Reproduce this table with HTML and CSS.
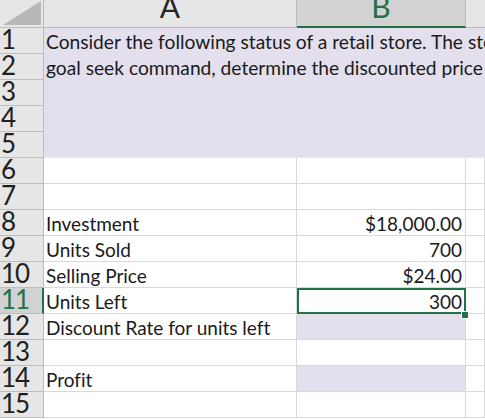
FILE: index.html
```html
<!DOCTYPE html>
<html>
<head>
<meta charset="utf-8">
<link rel="stylesheet" href="styles.css">
</head>
<body>
<div class="sheet">
  <div class="corner"><svg class="corner-tri" width="44" height="28" viewBox="0 0 44 28"><polygon points="41,1 41,25 3,25" fill="#b8b8b8"/></svg></div>
  <div class="colh">A</div>
  <div class="colh active">B</div>
  <div class="colh last"></div>

  <div class="merged"><div class="mline">Consider the following status of a retail store. The store manager wants to use the</div><div class="mline">goal seek command, determine the discounted price for the units left</div></div>

  <div class="rowh">1</div>
  <div class="rowh">2</div>
  <div class="rowh">3</div>
  <div class="rowh">4</div>
  <div class="rowh">5</div>

  <div class="rowh">6</div><div class="cell"></div><div class="cell"></div><div class="cell"></div>
  <div class="rowh">7</div><div class="cell"></div><div class="cell"></div><div class="cell"></div>
  <div class="rowh">8</div><div class="cell">Investment</div><div class="cell num">$18,000.00</div><div class="cell"></div>
  <div class="rowh">9</div><div class="cell">Units Sold</div><div class="cell num">700</div><div class="cell"></div>
  <div class="rowh">10</div><div class="cell">Selling Price</div><div class="cell num">$24.00</div><div class="cell"></div>
  <div class="rowh active">11</div><div class="cell">Units Left</div><div class="cell num selected">300<span class="handle"></span></div><div class="cell"></div>
  <div class="rowh">12</div><div class="cell">Discount Rate for units left</div><div class="cell fill"></div><div class="cell"></div>
  <div class="rowh">13</div><div class="cell"></div><div class="cell"></div><div class="cell"></div>
  <div class="rowh">14</div><div class="cell">Profit</div><div class="cell fill"></div><div class="cell"></div>
  <div class="rowh">15</div><div class="cell"></div><div class="cell"></div><div class="cell"></div>
</div>
</body>
</html>
```

FILE: styles.css
```css
html, body {
  margin: 0;
  padding: 0;
  background: #ffffff;
  overflow: hidden;
}

.sheet {
  display: grid;
  grid-template-columns: 44px 253px 169px 19px;
  grid-template-rows: 28px repeat(15, 26px);
  width: 485px;
  font-family: Lato, "Open Sans", sans-serif;
  font-variant-ligatures: none;
  color: #1a1a1a;
}

.corner {
  background: #e6e6e6;
  border-right: 1px solid #bdbdbd;
  border-bottom: 1px solid #bdbdbd;
  box-sizing: border-box;
  overflow: hidden;
}

.corner-tri {
  display: block;
}

.colh {
  background: #e6e6e6;
  border-right: 1px solid #bdbdbd;
  border-bottom: 1px solid #bdbdbd;
  box-sizing: border-box;
  overflow: hidden;
  text-align: center;
  font-size: 30px;
  line-height: 12px;
  color: #262626;
}

.colh.active {
  background: #d2d2d2;
  color: #217346;
  border-bottom: 2px solid #217346;
}

.colh.last {
  border-right: none;
}

.rowh {
  background: #e6e6e6;
  border-right: 1px solid #bdbdbd;
  border-bottom: 1px solid #bdbdbd;
  box-sizing: border-box;
  overflow: hidden;
  font-size: 26px;
  line-height: 23px;
  letter-spacing: -1px;
  padding-left: 1px;
  color: #1f1f1f;
}

.rowh.active {
  background: #d2d2d2;
  color: #217346;
  border-right: 2px solid #217346;
}

.merged {
  grid-column: 2 / 5;
  grid-row: 2 / 7;
  background: #e4dfec;
  border-bottom: 1px solid #e9e6f0;
  box-sizing: border-box;
  overflow: hidden;
  white-space: nowrap;
  padding-top: 1px;
  padding-left: 2px;
  font-size: 19.2px;
  line-height: 26px;
}

.cell {
  border-right: 1px solid #d9d9d9;
  border-bottom: 1px solid #d9d9d9;
  box-sizing: border-box;
  white-space: nowrap;
  font-size: 19px;
  line-height: 24px;
  padding-top: 2px;
  padding-left: 2px;
  padding-right: 3px;
}

.cell.num {
  text-align: right;
}

.cell.fill {
  background: #e4dfec;
}

.cell.selected {
  position: relative;
  outline: 2px solid #217346;
  outline-offset: -2px;
}

.handle {
  position: absolute;
  right: -4px;
  bottom: -6px;
  width: 6px;
  height: 6px;
  background: #217346;
  border: 1px solid #ffffff;
  box-sizing: content-box;
  z-index: 2;
}
```
